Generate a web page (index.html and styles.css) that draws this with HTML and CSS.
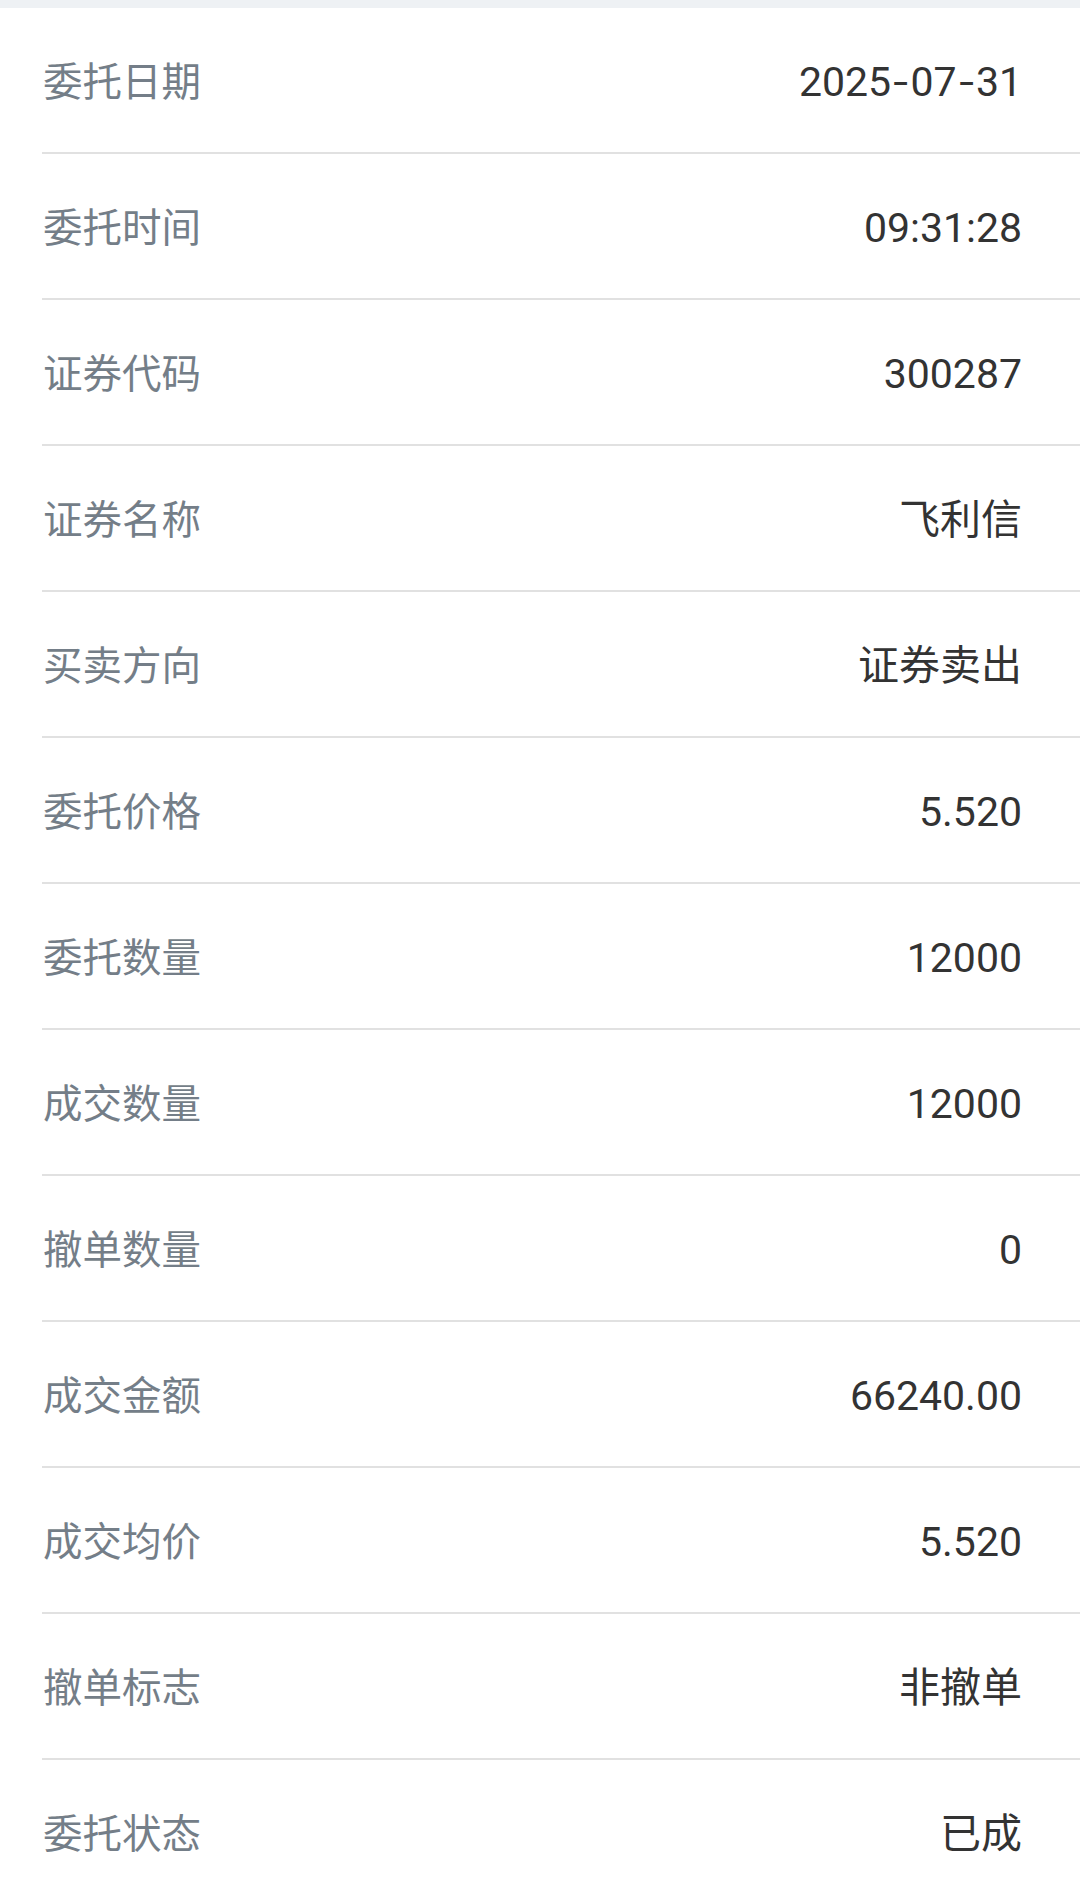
FILE: index.html
```html
<!DOCTYPE html>
<html lang="zh-CN">
<head>
<meta charset="utf-8">
<link rel="stylesheet" href="styles.css">
</head>
<body>
<div class="topbar"></div>
<ul class="list">
  <li class="row"><span class="label">委托日期</span><span class="value">2025<span class="dash">-</span>07<span class="dash">-</span>31</span></li>
  <li class="row"><span class="label">委托时间</span><span class="value">09:31:28</span></li>
  <li class="row"><span class="label">证券代码</span><span class="value">300287</span></li>
  <li class="row"><span class="label">证券名称</span><span class="value">飞利信</span></li>
  <li class="row"><span class="label">买卖方向</span><span class="value">证券卖出</span></li>
  <li class="row"><span class="label">委托价格</span><span class="value">5.520</span></li>
  <li class="row"><span class="label">委托数量</span><span class="value">12000</span></li>
  <li class="row"><span class="label">成交数量</span><span class="value">12000</span></li>
  <li class="row"><span class="label">撤单数量</span><span class="value">0</span></li>
  <li class="row"><span class="label">成交金额</span><span class="value">66240.00</span></li>
  <li class="row"><span class="label">成交均价</span><span class="value">5.520</span></li>
  <li class="row"><span class="label">撤单标志</span><span class="value">非撤单</span></li>
  <li class="row"><span class="label">委托状态</span><span class="value">已成</span></li>
</ul>
</body>
</html>
```
FILE: styles.css
```css
html, body {
  margin: 0;
  padding: 0;
  background: #ffffff;
}
body {
  font-family: Roboto, "Noto Sans CJK SC", sans-serif;
  overflow: hidden;
}
.topbar {
  height: 8px;
  background: #eef1f4;
}
.list {
  list-style: none;
  margin: 0;
  padding: 0 0 0 42px;
}
.row {
  height: 144px;
  display: flex;
  align-items: center;
  justify-content: space-between;
  border-bottom: 2px solid #e1e1e1;
  padding-right: 58px;
}
.label {
  font-size: 39.5px;
  color: #747e88;
  line-height: 1;
  padding-left: 1px;
  margin-top: 5px;
}
.value {
  font-size: 41px;
  color: #333333;
  line-height: 1;
  margin-top: 5px;
}
.dash {
  display: inline-block;
  transform: scaleX(1.3);
  margin: 0 4px;
}
```
